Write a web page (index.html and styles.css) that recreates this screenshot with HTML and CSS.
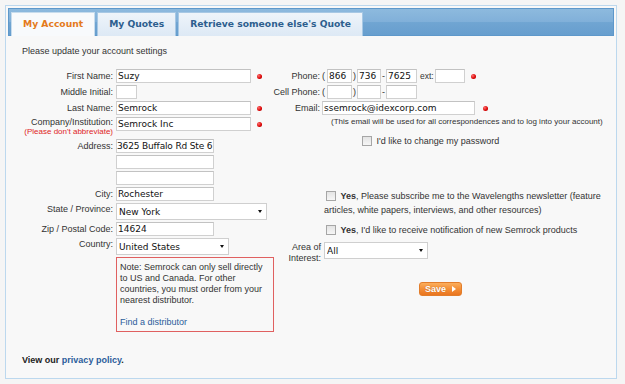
FILE: index.html
```html
<!DOCTYPE html>
<html lang="en">
<head>
    <meta charset="UTF-8">
    <meta name="viewport" content="width=device-width, initial-scale=1.0">
    <title>My Account</title>
    <link rel="stylesheet" href="styles.css">
</head>
<body>
    <div class="panel">
        <!-- Pestañas -->
        <div class="tabs">
            <div class="tab active">My Account</div>
            <div class="tab">My Quotes</div>
            <div class="tab">Retrieve someone else's Quote</div>
        </div>

        <div class="content">
            <p class="intro">Please update your account settings</p>

            <div class="form">
                <!-- Columna izquierda -->
                <div class="col-left">
                    <label>First Name:</label>
                    <div class="field"><input class="w-name" value="Suzy"><span class="req"></span></div>

                    <label>Middle Initial:</label>
                    <div class="field"><input class="w-mi"></div>

                    <label>Last Name:</label>
                    <div class="field"><input class="w-name" value="Semrock"><span class="req"></span></div>

                    <label class="company">Company/Institution:<span class="hint">(Please don't abbreviate)</span></label>
                    <div class="field"><input class="w-name" value="Semrock Inc"><span class="req"></span></div>

                    <label>Address:</label>
                    <div class="field"><input class="w-addr tight" value="3625 Buffalo Rd Ste 6"></div>

                    <span></span>
                    <div class="field"><input class="w-addr"></div>

                    <span></span>
                    <div class="field"><input class="w-addr"></div>

                    <label>City:</label>
                    <div class="field"><input class="w-addr" value="Rochester"></div>

                    <label class="sel-label">State / Province:</label>
                    <div class="select w-state">
                        <select><option>New York</option></select>
                    </div>

                    <label>Zip / Postal Code:</label>
                    <div class="field"><input class="w-addr" value="14624"></div>

                    <label class="sel-label">Country:</label>
                    <div class="select w-country">
                        <select><option>United States</option></select>
                    </div>

                    <span></span>
                    <div class="note">
                        Note: Semrock can only sell directly<br>
                        to US and Canada. For other<br>
                        countries, you must order from your<br>
                        nearest distributor.<br>
                        <br>
                        <a href="#">Find a distributor</a>
                    </div>
                </div>

                <!-- Columna derecha -->
                <div class="col-right">
                    <div class="grid-right">
                        <label>Phone:</label>
                        <div class="field phone">
                            <span class="paren">(</span><input class="w-area" value="866"><span class="paren">)</span><input class="w-pre" value="736"><span class="dash">-</span><input class="w-line" value="7625"><span class="ext">ext:</span><input class="w-ext"><span class="req"></span>
                        </div>

                        <label>Cell Phone:</label>
                        <div class="field phone">
                            <span class="paren">(</span><input class="w-area"><span class="paren">)</span><input class="w-pre"><span class="dash">-</span><input class="w-line">
                        </div>

                        <label>Email:</label>
                        <div class="field"><input class="w-email" value="ssemrock@idexcorp.com"><span class="req req-email"></span></div>
                    </div>

                    <p class="email-note">(This email will be used for all correspondences and to log into your account)</p>

                    <label class="pw"><input type="checkbox"> I'd like to change my password</label>

                    <p class="check news"><input type="checkbox"> <b>Yes</b>, Please subscribe me to the Wavelengths newsletter (feature<br>articles, white papers, interviews, and other resources)</p>

                    <p class="check news2"><input type="checkbox"> <b>Yes</b>, I'd like to receive notification of new Semrock products</p>

                    <div class="interest">
                        <label>Area of<br>Interest:</label>
                        <div class="select w-interest">
                            <select><option>All</option></select>
                        </div>
                    </div>

                    <button class="save">Save <span class="arrow"></span></button>
                </div>
            </div>

            <p class="privacy">View our <a href="#">privacy policy</a>.</p>
        </div>
    </div>
</body>
</html>
```

FILE: styles.css
```css
/* Estilos generales */
body {
    margin: 0;
    background: #f5f5f5;
    font-family: "Liberation Sans", Arial, sans-serif;
    font-size: 9px;
    color: #333;
}

a {
    color: #2b5c9b;
    text-decoration: none;
}

/* Panel principal */
.panel {
    box-sizing: border-box;
    width: 612px;
    height: 374px;
    margin: 5px;
    padding: 2px;
    border: 1px solid #bcd8ee;
    background: #f8f8f8;
}

/* Pestañas */
.tabs {
    box-sizing: border-box;
    display: flex;
    align-items: flex-end;
    gap: 2px;
    height: 28px;
    padding-left: 2px;
    border: 1px solid #5e98ca;
    background: linear-gradient(#8dbade 0%, #81b0d9 48%, #70a5d2 52%, #679ece 100%);
}

.tab {
    box-sizing: border-box;
    height: 24px;
    margin-bottom: -1px;
    padding: 0 11px;
    line-height: 22px;
    font-family: "DejaVu Sans", Verdana, sans-serif;
    font-weight: bold;
    font-size: 9.2px;
    color: #2d5e8e;
    background: linear-gradient(#eef4fa, #dde9f5);
    border: 1px solid #a7c8e4;
    border-bottom: none;
}

.tab.active {
    color: #e47a1b;
    background: #f8fafc;
    border-color: #c7dced;
}

/* Contenido */
.content {
    padding: 10px 0 0 14px;
}

.intro {
    margin: 0 0 12px;
    line-height: 11px;
}

.form {
    display: flex;
}

.col-left {
    width: 251px;
    display: grid;
    grid-template-columns: 91px auto;
    column-gap: 3px;
    row-gap: 2px;
    align-content: start;
    justify-items: start;
}

.col-left label,
.grid-right label {
    justify-self: stretch;
    text-align: right;
    line-height: 14px;
    white-space: nowrap;
}

.col-left .company {
    line-height: 10px;
}

.hint {
    display: block;
    font-size: 8px;
    color: #e02525;
}

.sel-label {
    line-height: 13px !important;
}

.field {
    display: flex;
    align-items: center;
    height: 14px;
}

input {
    box-sizing: border-box;
    height: 14px;
    margin: 0;
    padding: 0 1px;
    border: 1px solid #d0d0d0;
    border-top-color: #c2c2c2;
    background: #fff;
    font-family: "DejaVu Sans", Verdana, sans-serif;
    font-size: 9px;
    color: #111;
    outline: none;
}

input.tight {
    padding: 0;
    letter-spacing: -0.15px;
}

.w-name { width: 135px; }
.w-mi { width: 21px; }
.w-addr { width: 98px; }
.w-email { width: 153px; }
.w-area { width: 25px; }
.w-pre { width: 24px; }
.w-line { width: 31px; }
.w-ext { width: 30px; }

/* Punto rojo de campo obligatorio */
.req {
    width: 5px;
    height: 5px;
    margin-left: 6px;
    border-radius: 50%;
    background: radial-gradient(circle at 35% 35%, #ff7070, #d80000 60%, #a00000);
}

.req-email {
    margin-left: 8px;
}

/* Teléfono */
.phone .paren {
    width: 4px;
    margin-right: 1px;
}

.phone .paren + input + .paren {
    margin-left: 1px;
    margin-right: 0;
}

.phone .dash {
    width: 4px;
    margin-left: 1px;
}

.phone .ext {
    margin: 0 1px 0 3px;
    font-size: 8.5px;
}

/* Selects */
.select {
    position: relative;
    height: 17px;
}

.select select {
    box-sizing: border-box;
    width: 100%;
    height: 17px;
    margin: 0;
    padding: 0 2px;
    border: 1px solid #cfcfcf;
    border-radius: 0;
    background: #fff;
    font-family: "DejaVu Sans", Verdana, sans-serif;
    font-size: 9px;
    color: #111;
    appearance: none;
    -webkit-appearance: none;
    outline: none;
}

.select::after {
    content: "";
    position: absolute;
    right: 5px;
    top: 7px;
    border-left: 2.5px solid transparent;
    border-right: 2.5px solid transparent;
    border-top: 3px solid #111;
}

.w-state { width: 151px; }
.w-country { width: 113px; }
.w-interest { width: 104px; }

/* Nota de distribuidores */
.note {
    box-sizing: border-box;
    width: 158px;
    margin-top: 0;
    padding: 4px 3px 3px 3px;
    border: 1px solid #e06060;
    line-height: 11px;
    white-space: nowrap;
}

/* Columna derecha */
.col-right {
    width: 340px;
}

.grid-right {
    display: grid;
    grid-template-columns: 47px auto;
    column-gap: 2px;
    row-gap: 2px;
}

.email-note {
    margin: 1px 0 0 58px;
    font-size: 8px;
    line-height: 11px;
    white-space: nowrap;
}

input[type="checkbox"] {
    box-sizing: border-box;
    width: 10px;
    height: 10px;
    margin: 0 2px;
    padding: 0;
    border: 1px solid #a6a6a6;
    background: linear-gradient(#e4e4e4, #f6f6f6);
    appearance: none;
    -webkit-appearance: none;
    vertical-align: -2px;
}

.pw {
    display: block;
    margin: 8px 0 0 87px;
    line-height: 12px;
}

.check {
    margin: 0 0 0 51px;
    line-height: 14px;
    white-space: nowrap;
}

.news {
    margin-top: 42px;
}

.news2 {
    margin-top: 6px;
}

.interest {
    display: flex;
    margin-top: 5px;
}

.interest label {
    width: 48px;
    text-align: right;
    line-height: 11px;
}

.interest .select {
    margin-left: 3px;
}

/* Botón guardar */
.save {
    box-sizing: border-box;
    display: flex;
    align-items: center;
    justify-content: center;
    gap: 6px;
    width: 43px;
    height: 14px;
    margin: 18px 0 0 146px;
    padding: 0;
    border: 1px solid #e27d2b;
    border-radius: 3px;
    background: linear-gradient(#fcae5c, #f38f37 50%, #ea751f);
    color: #fff;
    font-family: "Liberation Sans", Arial, sans-serif;
    font-weight: bold;
    font-size: 9px;
    text-shadow: 0 0 1px #b85a10;
}

.save .arrow {
    border-left: 4px solid #fff;
    border-top: 3.5px solid transparent;
    border-bottom: 3.5px solid transparent;
}

/* Pie */
.privacy {
    margin: 23px 0 0;
    font-weight: bold;
    line-height: 11px;
    color: #222;
}
```
